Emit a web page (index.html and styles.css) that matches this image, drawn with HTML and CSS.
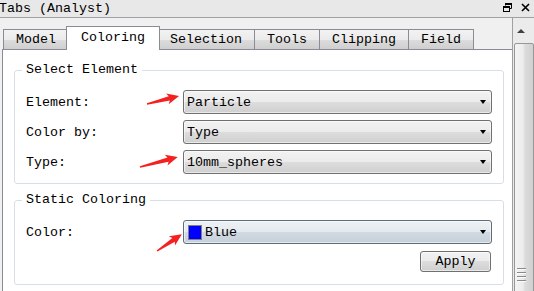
FILE: index.html
```html
<!DOCTYPE html>
<html lang="en">
<head>
    <meta charset="UTF-8">
    <title>Tabs (Analyst)</title>
    <link rel="stylesheet" href="styles.css">
</head>
<body>
<div class="window">
    <div class="titlebar">
        <span class="title">Tabs (Analyst)</span>
        <div class="title-buttons">
            <!-- float / restore -->
            <svg width="9" height="9" viewBox="0 0 9 9">
                <path d="M2.5 2.5V0.5h6v5h-2" fill="none" stroke="#000" stroke-width="1"/>
                <rect x="2" y="0" width="7" height="2" fill="#000"/>
                <rect x="0.5" y="3.5" width="6" height="5" fill="none" stroke="#000" stroke-width="1"/>
                <rect x="0" y="3" width="7" height="2" fill="#000"/>
            </svg>
            <!-- close -->
            <svg width="9" height="9" viewBox="0 0 9 9">
                <path d="M1 1L8 8M8 1L1 8" stroke="#000" stroke-width="1.6"/>
            </svg>
        </div>
    </div>

    <div class="dock">
        <div class="tabwidget">
            <div class="tabbar">
                <div class="tab">Model</div>
                <div class="tab active">Coloring</div>
                <div class="tab">Selection</div>
                <div class="tab">Tools</div>
                <div class="tab">Clipping</div>
                <div class="tab">Field</div>
            </div>

            <div class="panel">
                <!-- 选择元素 -->
                <fieldset class="group">
                    <legend>Select Element</legend>
                    <div class="form">
                        <label>Element:</label>
                        <div class="combo"><span>Particle</span><i class="arrow"></i></div>
                        <label>Color by:</label>
                        <div class="combo"><span>Type</span><i class="arrow"></i></div>
                        <label>Type:</label>
                        <div class="combo"><span>10mm_spheres</span><i class="arrow"></i></div>
                    </div>
                </fieldset>

                <!-- 静态着色 -->
                <fieldset class="group group-static">
                    <legend>Static Coloring</legend>
                    <div class="form">
                        <label>Color:</label>
                        <div class="combo combo-hover"><span class="swatch"></span><span>Blue</span><i class="arrow"></i></div>
                    </div>
                    <div class="actions">
                        <button class="btn">Apply</button>
                    </div>
                </fieldset>
            </div>
        </div>

        <div class="vscroll">
            <div class="scroll-up"><i></i></div>
            <div class="thumb"><div class="grip"></div></div>
        </div>
    </div>

    <!-- annotation arrows -->
    <svg class="marks" width="534" height="291" viewBox="0 0 534 291">
        <g transform="translate(147,104) rotate(-14)">
            <polygon points="0,-0.7 23,-2.2 21,-5.5 33,0 21,5.5 23,2.2 0,0.7" fill="#f52020"/>
        </g>
        <g transform="translate(140,167) rotate(-14.7)">
            <polygon points="0,-0.7 29,-2.2 27,-5.5 39,0 27,5.5 29,2.2 0,0.7" fill="#f52020"/>
        </g>
        <g transform="translate(157,251) rotate(-34)">
            <polygon points="0,-0.7 20,-2.2 18,-5.5 30,0 18,5.5 20,2.2 0,0.7" fill="#f52020"/>
        </g>
    </svg>
</div>
</body>
</html>
```

FILE: styles.css
```css
* {
    box-sizing: border-box;
}

body {
    margin: 0;
    font-family: "Liberation Mono", "DejaVu Sans Mono", monospace;
    font-size: 13.33px;
    color: #000;
    background: #f0f0f0;
}

.window {
    position: relative;
    width: 534px;
    height: 291px;
    overflow: hidden;
    display: flex;
    flex-direction: column;
}

/* title bar */
.titlebar {
    height: 18px;
    flex: none;
    display: flex;
    align-items: center;
    justify-content: space-between;
    background: #e8e8e8;
    border-bottom: 1px solid #a0a0a0;
}

.title {
    margin-left: -1px;
    line-height: 17px;
}

.title-buttons {
    display: flex;
    align-items: center;
    gap: 9px;
    padding-right: 4px;
    margin-top: -2px;
}

/* dock body */
.dock {
    flex: 1;
    display: flex;
    min-height: 0;
}

.tabwidget {
    flex: 1;
    display: flex;
    flex-direction: column;
    padding-top: 8px;
}

.tabbar {
    display: flex;
    align-items: flex-end;
    padding-left: 3px;
    height: 23px;
}

.tab {
    height: 20px;
    line-height: 19px;
    padding: 0 12px;
    border: 1px solid #898c95;
    border-bottom: none;
    margin-left: -1px;
    background: linear-gradient(#f2f2f2 0%, #ebebeb 50%, #dddddd 50%, #cfcfcf 100%);
}

.tab:first-child {
    margin-left: 0;
}

.tab.active {
    position: relative;
    z-index: 1;
    height: 24px;
    line-height: 22px;
    margin: 0 -2px -1px -3px;
    padding: 0 14px;
    background: #fff;
}

.panel {
    flex: 1;
    margin-left: 2px;
    background: #fff;
    border-left: 1px solid #898c95;
    border-top: 1px solid #898c95;
    padding: 12px 8px 0 11px;
}

/* group boxes */
.group {
    margin: 0;
    border: 1px solid #d5dfe5;
    border-radius: 3px;
    padding: 12px 11px 9px;
}

.group legend {
    padding: 0 4px;
    margin-left: -4px;
    line-height: 16px;
}

.group-static {
    margin-top: 8px;
    padding-bottom: 12px;
}

.form {
    display: grid;
    grid-template-columns: 157px 1fr;
    row-gap: 6px;
    align-items: center;
}

.combo {
    height: 24px;
    display: flex;
    align-items: center;
    padding: 0 5px 0 3px;
    border: 1px solid #707070;
    border-radius: 3px;
    background: linear-gradient(#f2f2f2 0%, #ebebeb 50%, #dddddd 50%, #cfcfcf 100%);
    box-shadow: inset 0 0 0 1px rgba(255,255,255,0.55);
}

.combo-hover {
    border-color: #5f6d7a;
    background: linear-gradient(#eef2f5 0%, #e4e9ee 50%, #d2dae2 50%, #c5d0d9 100%);
}

.arrow {
    margin-left: auto;
    width: 0;
    height: 0;
    border-top: 4px solid #000;
    border-left: 3.5px solid transparent;
    border-right: 3.5px solid transparent;
}

.swatch {
    width: 14px;
    height: 15px;
    margin: 0 3px 0 1px;
    background: #0000ff;
    border: 1px solid #7f7f7f;
}

.actions {
    display: flex;
    justify-content: flex-end;
    margin-top: 7px;
}

.btn {
    width: 71px;
    height: 21px;
    margin-right: 1px;
    padding: 0;
    font: inherit;
    color: #000;
    border: 1px solid #707070;
    border-radius: 3px;
    background: linear-gradient(#f2f2f2 0%, #ebebeb 50%, #dddddd 50%, #cfcfcf 100%);
    box-shadow: inset 0 0 0 1px rgba(255,255,255,0.55);
}

/* scrollbar */
.vscroll {
    width: 22px;
    flex: none;
    display: flex;
    flex-direction: column;
    background: #ebebeb;
    border-left: 1px solid #a0a0a0;
}

.scroll-up {
    height: 25px;
    flex: none;
    display: flex;
    align-items: center;
    padding-left: 4px;
}

.scroll-up i {
    width: 0;
    height: 0;
    border-bottom: 4px solid #404040;
    border-left: 4px solid transparent;
    border-right: 4px solid transparent;
}

.thumb {
    height: 460px;
    flex: none;
    margin-left: 1px;
    border: 1px solid #979797;
    border-radius: 2px;
    background: linear-gradient(to right, #f4f4f4 0%, #ececec 45%, #dcdcdc 55%, #d0d0d0 100%);
    padding-top: 224px;
}

.grip {
    width: 9px;
    height: 14px;
    margin-left: 2px;
    background: repeating-linear-gradient(#8a8a8a 0 1px, #fbfbfb 1px 2px, transparent 2px 4px);
}

.marks {
    position: absolute;
    left: 0;
    top: 0;
    pointer-events: none;
}
```
